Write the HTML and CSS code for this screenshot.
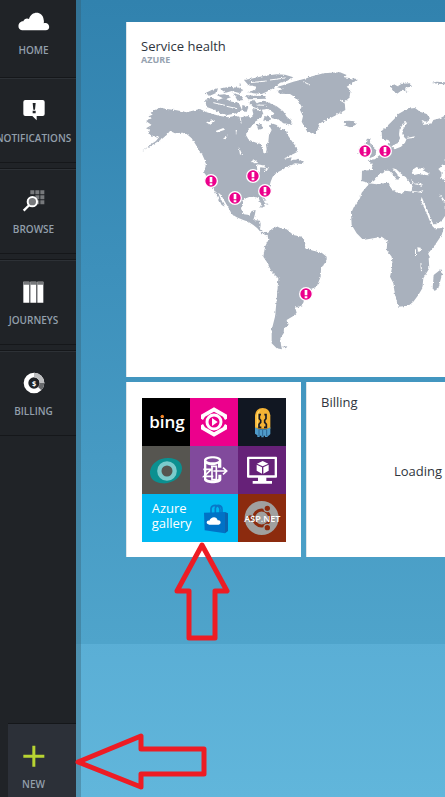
FILE: index.html
```html
<!DOCTYPE html>
<html lang="en">
<head>
<meta charset="utf-8">
<meta name="viewport" content="width=device-width, initial-scale=1">
<title>Azure Portal</title>
<link rel="stylesheet" href="styles.css">
</head>
<body>
<div class="app">
  <nav class="sidebar" aria-label="Main">
    <button class="nav-item nav-home" type="button">
      <svg class="nav-icon" viewBox="0 0 96 72" width="32" height="24"><path fill="#fff" d="M12 61C-5 58 0 33 16 34C19 24 29 24 33 27C40 2 74 2 77 29C78 33 78 36 77 40C94 34 101 59 83 61Z"/></svg>
      <span class="nav-label">HOME</span>
    </button>
    <button class="nav-item" type="button">
      <svg class="nav-icon" viewBox="0 0 96 72" width="32" height="24"><path fill="#fff" d="M22 6H74Q80 6 80 12V48Q80 54 74 54H56V67L43 54H22Q16 54 16 48V12Q16 6 22 6Z"/><path fill="#202327" d="M44 15H53L51 35H46ZM44 38H53V46H44Z"/></svg>
      <span class="nav-label">NOTIFICATIONS</span>
    </button>
    <button class="nav-item" type="button">
      <svg class="nav-icon" viewBox="0 0 96 72" width="32" height="24"><path fill="#77797c" d="M37 4H49V16H37ZM52 4H64V16H52ZM67 4H79V16H67ZM52 19H64V31H52ZM67 19H79V31H67ZM67 34H79V46H67ZM52 34H64V46H52Z"/><path stroke="#fff" stroke-width="7" d="M34 48L17 65"/><circle cx="43" cy="38" r="14" fill="#77797c" stroke="#fff" stroke-width="6"/></svg>
      <span class="nav-label">BROWSE</span>
    </button>
    <button class="nav-item" type="button">
      <svg class="nav-icon" viewBox="0 0 96 72" width="32" height="24"><path fill="#fff" d="M16 5H34V68H16ZM37 5H55V68H37ZM58 5H76V68H58Z"/><path fill="#77797c" d="M16 5H34V14H16ZM37 5H55V14H37ZM58 5H76V14H58Z"/></svg>
      <span class="nav-label">JOURNEYS</span>
    </button>
    <button class="nav-item" type="button">
      <svg class="nav-icon" viewBox="0 0 96 72" width="32" height="24"><g fill="none" stroke-width="14"><circle cx="48" cy="36" r="24" stroke="#fff"/><path stroke="#bcbdbf" d="M48 12A24 24 0 0 1 72 36"/><path stroke="#67696c" d="M72 36A24 24 0 0 1 65 53"/></g><text class="coin" x="48" y="44">$</text></svg>
      <span class="nav-label">BILLING</span>
    </button>
    <button class="nav-item nav-new" type="button">
      <svg class="nav-icon" viewBox="0 0 96 72" width="32" height="24"><path fill="#b8d432" d="M43 5H52V32H79V41H52V68H43V41H16V32H43Z"/></svg>
      <span class="nav-label">NEW</span>
    </button>
  </nav>

  <main class="board">
    <div class="tiles">
      <section class="tile health">
        <h2>Service health</h2>
        <p class="subtitle">AZURE</p>
        <svg class="map" viewBox="63 180 912 849" role="img" aria-label="World map">
          <defs>
            <filter id="coast" x="-5%" y="-5%" width="110%" height="110%"><feTurbulence type="fractalNoise" baseFrequency=".13" numOctaves="2" seed="4"/><feDisplacementMap in="SourceGraphic" scale="9" xChannelSelector="R" yChannelSelector="G"/></filter>
            <g id="pin"><circle r="19" fill="#ec008c" stroke="#fff" stroke-width="4"/><path fill="#fff" d="M-4-12H4V4H-4ZM-4 7H4V13H-4Z"/></g>
          </defs>
          <g filter="url(#coast)">
            <g fill="#a9b1bd">
              <path d="M78 333L95 325 88 318 97 314 92 308 104 300 121 293 140 297 170 301 200 307 215 303 240 297 258 306 275 311 300 318 325 322 345 318 365 322 385 318 392 325 400 312 397 300 405 295 415 303 425 298 430 312 422 325 405 335 398 345 385 360 378 375 385 388 400 395 420 402 428 412 430 428 437 431 440 418 438 405 445 395 447 375 455 360 447 345 455 340 470 345 480 355 497 360 505 378 520 400 532 415 533 425 520 432 500 440 492 447 515 442 512 452 535 446 550 456 545 462 525 460 500 470 490 478 470 488 458 500 452 515 447 535 440 550 426 562 435 580 433 592 425 587 416 564 400 560 385 562 372 568 366 580 363 600 372 613 388 615 395 603 407 600 405 612 400 630 420 632 422 645 420 658 430 668 442 665 449 670 438 676 425 670 412 655 400 645 385 635 370 630 350 622 335 612 328 598 315 575 303 555 294 547 300 562 314 590 305 585 295 565 285 545 272 525 258 500 252 485 258 465 254 450 245 430 235 420 228 405 215 385 200 372 185 368 165 370 150 363 140 375 125 388 105 400 80 415 65 425 90 405 108 393 118 380 100 378 85 372 90 360 78 355 95 345Z"/>
              <path d="M372 210L400 205 430 198 470 193 495 194 520 202 502 212 480 218 460 235 440 245 425 252 400 250 383 246 405 240 410 230 385 225Z"/>
              <path d="M255 250L275 240 294 235 290 248 270 257ZM300 236L327 230 355 233 370 240 358 249 335 243 317 248ZM375 255L400 257 437 258 435 266 385 268ZM290 255L315 253 333 262 315 268ZM340 250L360 255 370 270 353 272ZM358 220L363 224 360 228Z"/>
              <path d="M255 270L275 263 295 270 310 264 335 275 356 278 366 300 350 310 322 315 300 310 285 300 260 291ZM385 276L403 270 410 280 430 272 450 280 470 289 490 304 500 320 515 332 513 344 490 340 475 328 453 325 463 310 445 297 423 299 400 291ZM367 285L385 290 380 306 366 302ZM433 318L450 322 448 334 430 333Z"/>
              <path d="M470 231L491 225 520 215 560 205 568 201 610 190 660 187 680 195 672 202 713 208 695 221 680 230 692 241 688 263 674 275 676 300 645 317 630 325 600 340 586 376 560 362 545 335 549 318 540 300 545 290 530 265 510 252 480 251 470 243 490 237Z"/>
              <path d="M668 334L677 342 671 346 690 352 708 344 703 334 685 332ZM810 227L822 223 833 229 845 221 870 220 876 230 862 232 854 236 863 247 848 239 829 253ZM935 219L950 215 975 217 975 223 952 221ZM740 388L752 385 749 396 756 407 769 418 767 437 748 445 752 431 745 421 748 410 737 401ZM722 410L737 405 740 421 726 436 714 430ZM416 554L432 562 441 575ZM430 580L442 581 446 585ZM425 594L436 596"/>
              <path d="M785 362L798 352 810 340 825 325 835 312 852 302 865 296 885 294 900 305 920 312 930 325 920 335 905 330 910 345 935 340 940 330 960 325 977 316V615L965 632 942 645 935 632 925 605 913 580 905 561 902 572 918 604 926 625 935 645 942 655 960 655 973 650 965 675 945 705 925 730 928 775 910 805 907 835 895 855 880 875 865 887 835 890 825 855 820 820 810 800 818 765 815 740 800 720 802 692 785 680 760 685 730 690 710 670 695 645 693 610 702 590 720 565 725 548 740 530 748 520 770 523 806 518 813 535 828 547 845 552 854 542 880 545 905 548 910 540 895 545 875 542 878 526 864 512 858 502 844 492 828 477 817 475 831 491 838 503 833 513 824 500 808 482 796 482 776 496 762 513 748 519 725 513 726 482 755 480 758 464 743 450 765 448 781 433 797 422 812 413 802 398 812 401 821 412 805 390 786 386Z"/>
              <path d="M445 670L455 657 470 649 485 656 500 658 520 675 545 680 557 700 555 715 580 722 605 728 620 740 620 752 603 775 602 800 590 830 565 840 555 860 548 885 534 892 525 892 530 908 520 918 500 930 503 947 492 955 491 970 481 985 483 1005 486 1018 470 1015 455 1000 455 960 465 920 470 870 475 805 455 785 440 755 430 740 435 710 445 690 443 677ZM965 776L967 790 955 835 944 843 938 834 941 795ZM420 588L431 583 423 595ZM485 1010L502 1009 498 1015Z"/>
            </g>
            <g fill="#fff">
              <path d="M854 336L862 338 848 360 847 372 855 385 885 379 881 384 860 386 855 398 843 410 824 418 817 411 825 403 833 400 840 385 837 374 839 357ZM875 490L881 477 890 471 900 476 915 472 908 481 929 491 923 496 895 492 883 495ZM955 477L969 466 977 469V515L963 505 965 488ZM873 505L878 520 906 521 910 528 884 523ZM958 552L966 560 977 575 968 573ZM892 712L902 713 903 724 894 726ZM885 716L888 719 888 742 885 741ZM901 760L904 760 906 784 903 783Z"/>
              <path d="M392 455L404 450 415 459 402 460ZM410 463L431 466 438 474 421 472 418 486 412 482ZM430 482L446 473 440 483ZM285 364L310 354 315 359 292 367ZM258 337L281 329 280 335 268 343ZM356 410L366 432 360 434ZM309 386L323 376 317 388ZM347 360L351 360 348 373Z"/>
            </g>
            <path fill="#a9b1bd" d="M410 345L425 342 428 356 415 360Z"/>
            <g fill="none" stroke="#fff" stroke-width="3"><path d="M390 218L440 213M450 210L495 204M280 278L315 286M320 289L352 296M410 285L440 286M550 215L570 225M660 270L676 280M360 320L364 340"/></g>
          </g>
          <use href="#pin" x="273" y="513"/><use href="#pin" x="399" y="498"/><use href="#pin" x="435" y="543"/><use href="#pin" x="345" y="564"/><use href="#pin" x="735" y="423"/><use href="#pin" x="795" y="423"/><use href="#pin" x="558" y="852"/>
        </svg>
      </section>

      <a class="tile gallery" href="#gallery" aria-label="Azure gallery">
        <svg class="cell black" viewBox="0 0 144 144"><text class="bing" x="75" y="90">bing</text><circle cx="61" cy="55" r="5" fill="#f5821f"/></svg>
        <svg class="cell pink" viewBox="0 0 144 144"><path fill="#fff" d="M33 62V50L72 28 111 50V62L105 66 99 56 72 41 45 56 39 66ZM33 82V94L72 116 111 94V82L105 78 99 88 72 103 45 88 39 78Z"/><circle cx="72" cy="72" r="21" fill="none" stroke="#fff" stroke-width="9"/><path fill="#fff" d="M66 60L83 72 66 84Z"/></svg>
        <svg class="cell navy" viewBox="0 0 144 144"><path fill="#f5b334" d="M51 92V52Q53 31 74 30Q95 31 97 52V92Z"/><path fill="#ffd86b" d="M56 86V52Q58 39 67 36L60 50V86Z"/><path fill="none" stroke="#191b25" stroke-width="5" d="M69 50H64V62L68 67V73L63 79V88H70M79 50H84V62L80 67V73L85 79V88H78"/><path fill="#4f9bc9" d="M51 88L62 94H86L97 88V108L92 113H89V117H81V113H77V118H70V113H65V117H58V112L51 107Z"/><path stroke="#2e6794" stroke-width="3" d="M63 96V114M74 96V114M86 96V114"/></svg>
        <svg class="cell gray" viewBox="0 0 144 144"><path fill="#0b9090" d="M24 76C28 51 52 35 80 36C105 37 120 49 120 67C120 93 92 114 62 112C38 111 22 98 24 76Z"/><circle cx="75" cy="75" r="23" fill="#565550" stroke="#7bcbcc" stroke-width="13"/></svg>
        <svg class="cell purple" viewBox="0 0 144 144"><path fill="#fff" d="M42 43C42 27 94 27 94 43V65H84V53C70 60 59 59 49 54V98C57 104 75 104 85 98V86H94V102C90 115 47 115 42 102Z"/><ellipse cx="68" cy="43" rx="19" ry="6" fill="#814a9c"/><g fill="none" stroke="#fff" stroke-width="5"><path d="M40 70H64L42 91H70M63 61H79V101H66V61M70 75H109M99 65L110 75 99 85"/></g></svg>
        <svg class="cell violet" viewBox="0 0 144 144"><path fill="#fff" fill-rule="evenodd" d="M30 32H114Q117 32 117 35V92Q117 95 114 95H30Q27 95 27 92V35Q27 32 30 32ZM34 39V88H110V39ZM60 95H85V105H102V113H44V105H60Z"/><path fill="#fff" d="M74 45L91 53 74 61 57 53ZM56 56L72 64V83L56 74ZM92 56L76 64V83L92 74Z"/></svg>
        <svg class="cell cyan wide" viewBox="0 0 288 144"><text class="gallery-name" x="29" y="57">Azure</text><text class="gallery-name" x="29" y="102">gallery</text><path fill="none" stroke="#0878c8" stroke-width="5" d="M207 59V43Q209 34 220 34Q233 35 234 46V57M220 57V43Q222 34 230 34Q240 35 240 46V57"/><path fill="#0072c6" d="M186 56L249 54V118L188 109Z"/><path fill="#0b64ae" d="M249 54L258 58V111L249 118Z"/><path fill="#fff" d="M202 92C190 91 193 78 202 80C206 68 224 65 227 79C236 76 240 90 230 92Z"/></svg>
        <svg class="cell rust" viewBox="0 0 144 144"><circle cx="71" cy="72" r="51" fill="#a0a09f"/><circle cx="71" cy="72" r="24" fill="none" stroke="#8c2b0e" stroke-width="9"/><g fill="#8c2b0e" stroke="#a0a09f" stroke-width="4"><circle cx="37" cy="72" r="10"/><circle cx="88" cy="43" r="10"/><circle cx="88" cy="101" r="10"/></g><text class="aspnet" x="73" y="84">ASP.NET</text></svg>
      </a>

      <section class="tile billing">
        <h2>Billing</h2>
        <p class="loading">Loading</p>
      </section>
    </div>
  </main>

  <svg class="arrow arrow-up" viewBox="0 0 56 100" width="56" height="100" aria-hidden="true"><path d="M28 4L53 50H41V97H15V50H3Z"/></svg>
  <svg class="arrow arrow-left" viewBox="0 0 134 58" width="134" height="58" aria-hidden="true"><path d="M4 29L67 3V16H130V41H67V54Z"/></svg>
</div>
</body>
</html>
```
FILE: styles.css
```css
* {
  box-sizing: border-box;
}

body {
  margin: 0;
  font-family: "Open Sans", "Noto Sans", sans-serif;
  color: #2f353d;
}

h2,
p {
  margin: 0;
}

.app {
  position: relative;
  display: flex;
  min-height: 100vh;
  overflow: hidden;
  background: linear-gradient(#50a5cc, #5aaed5 80%, #61b6db);
}

.sidebar {
  position: relative;
  z-index: 1;
  display: flex;
  flex: 0 0 76px;
  flex-direction: column;
  gap: 7px;
  min-width: 0;
  background: #202327;
  box-shadow: 5px 0 0 rgba(54, 88, 106, 0.36);
}

.nav-item {
  display: flex;
  flex-direction: column;
  align-items: center;
  gap: 8px;
  height: 84px;
  padding: 20px 9px 0 0;
  border: 0;
  background: #202327;
  box-shadow: 0 -1px #15171a, inset 0 1px #2d3136, 0 1px #15171a;
  font: inherit;
}

.nav-home {
  height: 71px;
  padding-top: 10px;
  box-shadow: none;
}

.nav-icon {
  flex: none;
}

.nav-label {
  color: #929fab;
  font-size: 10px;
  font-weight: 600;
  line-height: 16px;
  white-space: nowrap;
}

.coin {
  fill: #fff;
  font-size: 22px;
  font-weight: 700;
  text-anchor: middle;
}

.nav-new {
  height: 73px;
  margin-top: auto;
  margin-left: 8px;
  padding-right: 17px;
  background: #2c3038;
  box-shadow: 0 -1px #15171a;
}

.board {
  flex: 1;
  align-self: flex-start;
  min-width: 0;
  padding: 22px 0 87px 50px;
  background: linear-gradient(#3182ae, #3d90bb 42%, #4fa4cb);
}

.tiles {
  display: grid;
  grid-template-columns: 175px 1fr;
  gap: 5px;
}

.tile {
  min-width: 0;
  background: #fff;
  box-shadow: inset 1px 0 #dfe5e9;
}

.health {
  grid-column: 1 / -1;
  padding: 16px 0 24px 15px;
}

h2 {
  font-size: 13px;
  font-weight: 400;
  line-height: 16px;
}

.subtitle {
  color: #96a2b0;
  font-size: 9px;
  font-weight: 700;
  line-height: 12px;
}

.map {
  display: block;
  width: 100%;
  margin-top: 4px;
}

.gallery {
  display: grid;
  grid-template-columns: repeat(3, 48px);
  grid-auto-rows: 48px;
  height: 175px;
  padding: 16px;
}

.cell {
  display: block;
  width: 100%;
  height: 48px;
}

.wide { grid-column: span 2; }
.black { background: #000; }
.pink { background: #ec008c; }
.navy { background: #111722; }
.gray { background: #565550; }
.purple { background: #814a9c; }
.violet { background: #662178; }
.cyan { background: #00b9f2; }
.rust { background: #8c2b0e; }

.cell text {
  fill: #fff;
}

.bing {
  font-size: 51px;
  font-weight: 600;
  text-anchor: middle;
}

.gallery-name {
  font-size: 39px;
}

.aspnet {
  font-size: 27px;
  font-weight: 600;
  text-anchor: middle;
}

.billing {
  padding: 12px 3px 0 15px;
}

.loading {
  margin-top: 53px;
  font-size: 13px;
  line-height: 16px;
  text-align: right;
}

.arrow {
  position: absolute;
  z-index: 2;
  fill: none;
  stroke: #ed1c24;
  stroke-width: 5;
  stroke-linejoin: round;
}

.arrow-up {
  top: 541px;
  left: 174px;
}

.arrow-left {
  top: 733px;
  left: 74px;
}
```
